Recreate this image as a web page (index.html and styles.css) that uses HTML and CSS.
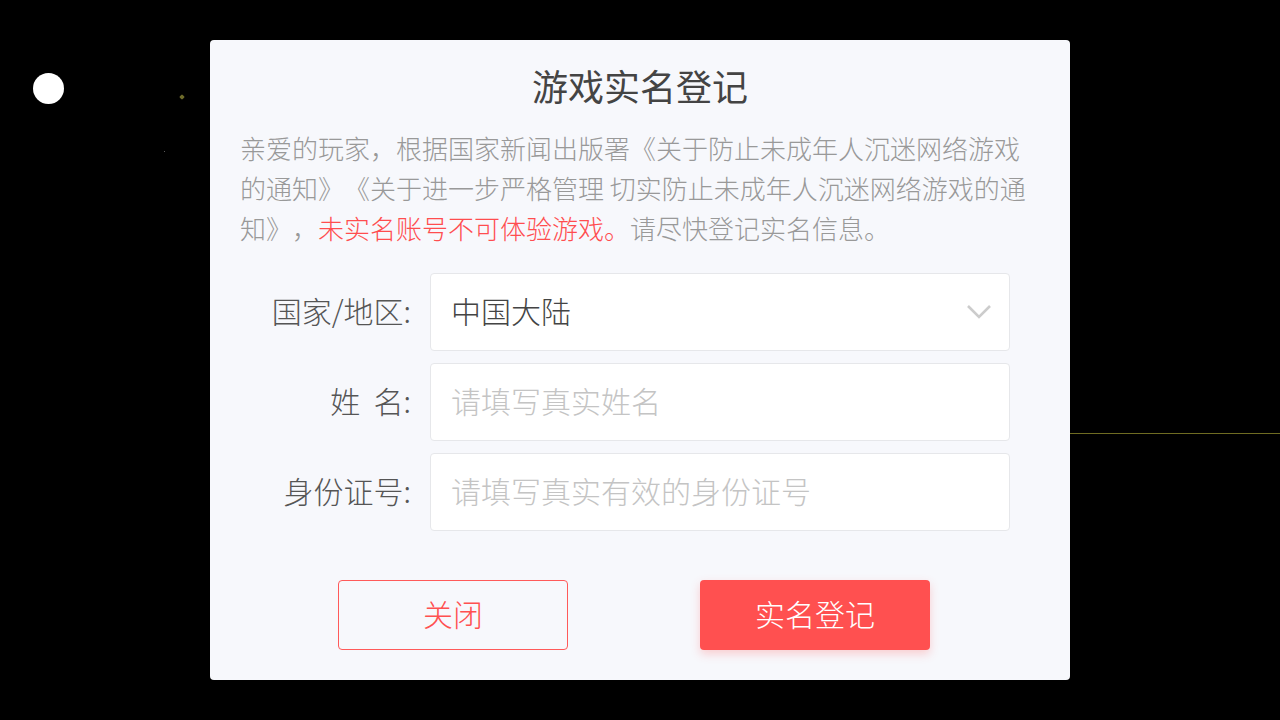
FILE: index.html
```html
<!DOCTYPE html>
<html lang="zh-CN">
<head>
<meta charset="utf-8">
<title>游戏实名登记</title>
<link rel="stylesheet" href="styles.css">
</head>
<body>
<div class="bg-dot bg-circle"></div>
<div class="bg-dot bg-speck1"></div>
<div class="bg-dot bg-speck2"></div>
<div class="bg-line"></div>
<div class="dialog">
  <h1 class="title">游戏实名登记</h1>
  <p class="notice">亲爱的玩家，根据国家新闻出版署《关于防止未成年人沉迷网络游戏的通知》《关于进一步严格管理 切实防止未成年人沉迷网络游戏的通知》，<span class="warn">未实名账号不可体验游戏。</span>请尽快登记实名信息。</p>
  <div class="form">
    <div class="row">
      <label class="label">国家/地区:</label>
      <div class="field select">
        <span class="value">中国大陆</span>
        <svg class="chevron" width="26" height="16" viewBox="0 0 26 16"><polyline points="2,2 13,13 24,2" fill="none" stroke="#cccccc" stroke-width="2.6"/></svg>
      </div>
    </div>
    <div class="row">
      <label class="label">姓&nbsp;&nbsp;名:</label>
      <input class="field input" type="text" placeholder="请填写真实姓名">
    </div>
    <div class="row">
      <label class="label">身份证号:</label>
      <input class="field input" type="text" placeholder="请填写真实有效的身份证号">
    </div>
  </div>
  <div class="actions">
    <button class="btn btn-close">关闭</button>
    <button class="btn btn-submit">实名登记</button>
  </div>
</div>
</body>
</html>
```
FILE: styles.css
```css
html, body {
  margin: 0;
  padding: 0;
  width: 1280px;
  height: 720px;
  background: #000;
  overflow: hidden;
}
body {
  display: flex;
  align-items: center;
  justify-content: center;
  font-family: "Noto Sans CJK SC", "Noto Sans", sans-serif;
  position: relative;
  text-spacing-trim: space-all;
}
.bg-dot {
  position: absolute;
  border-radius: 50%;
}
.bg-circle {
  left: 33px;
  top: 73px;
  width: 31px;
  height: 31px;
  background: #fff;
}
.bg-speck1 {
  left: 180px;
  top: 95px;
  width: 4px;
  height: 4px;
  background: #6d6a2a;
  border-radius: 1px;
  transform: rotate(45deg);
}
.bg-speck2 {
  left: 164px;
  top: 151px;
  width: 1px;
  height: 1px;
  background: #777;
}
.bg-line {
  position: absolute;
  left: 1070px;
  top: 433px;
  width: 210px;
  height: 1px;
  background: #6f6c22;
}
.dialog {
  width: 860px;
  height: 640px;
  box-sizing: border-box;
  background: #f7f8fc;
  border-radius: 4px;
  padding: 22px 30px 30px;
  display: flex;
  flex-direction: column;
  position: relative;
  z-index: 1;
}
.title {
  margin: 0;
  font-size: 36px;
  line-height: 46px;
  font-weight: 400;
  color: #444;
  text-align: center;
}
.notice {
  margin: 20px 0 0;
  font-size: 26px;
  line-height: 40px;
  color: #999;
  font-weight: 300;
  text-spacing-trim: space-all;
}
.warn {
  color: #ff4d4f;
}
.form {
  margin-top: 25px;
  display: flex;
  flex-direction: column;
  gap: 12px;
}
.row {
  display: flex;
  align-items: center;
}
.label {
  width: 171px;
  margin-right: 19px;
  padding-bottom: 4px;
  text-align: right;
  font-size: 30px;
  color: #555;
  font-weight: 300;
  white-space: nowrap;
}
.field {
  width: 580px;
  height: 78px;
  box-sizing: border-box;
  border: 1px solid #e6e7ea;
  border-radius: 4px;
  background: #fff;
  padding: 0 20px 4px;
  font-family: "Noto Sans CJK SC", "Noto Sans", sans-serif;
  font-size: 30px;
  font-weight: 300;
  color: #444;
  outline: none;
}
.input::placeholder {
  color: #c4c4c4;
}
.select {
  display: flex;
  align-items: center;
  justify-content: space-between;
  padding-right: 17px;
  padding-bottom: 0;
}
.value {
  color: #444;
  padding-bottom: 4px;
}
.chevron {
  display: block;
}
.actions {
  margin-top: 49px;
  display: flex;
  justify-content: space-between;
  padding: 0 110px 0 98px;
}
.btn {
  width: 230px;
  height: 70px;
  box-sizing: border-box;
  border-radius: 4px;
  font-family: "Noto Sans CJK SC", "Noto Sans", sans-serif;
  font-size: 30px;
  font-weight: 300;
  padding: 0 0 4px;
  cursor: pointer;
}
.btn-close {
  background: transparent;
  border: 1px solid #ff5a5a;
  color: #ff5050;
}
.btn-submit {
  background: #ff5050;
  border: none;
  color: #fff;
  box-shadow: 0 4px 10px rgba(255, 80, 80, 0.25);
}
```
